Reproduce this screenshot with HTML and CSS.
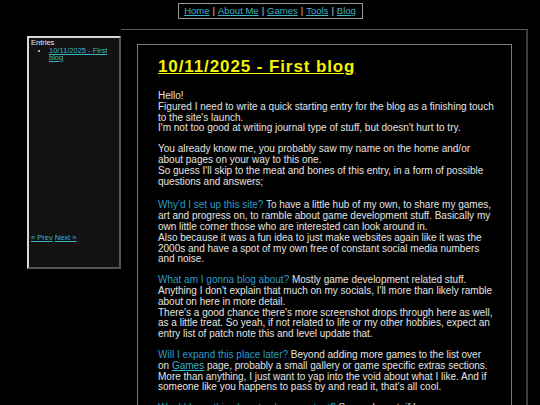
FILE: index.html
```html
<!DOCTYPE html>
<html>
<head>
<meta charset="utf-8">
<link rel="stylesheet" href="styles.css">
</head>
<body>
<nav class="topnav">
  <a href="#">Home</a><span class="sep">|</span><a href="#">About Me</a><span class="sep">|</span><a href="#">Games</a><span class="sep">|</span><a href="#">Tools</a><span class="sep">|</span><a href="#">Blog</a>
</nav>
<div class="layout">
  <aside class="sidebar">
    <div class="side-title">Entries</div>
    <ul class="entries">
      <li><a href="#">10/11/2025 - First blog</a></li>
    </ul>
    <div class="pager"><a href="#">« Prev</a> <a href="#">Next »</a></div>
  </aside>
  <div class="frame">
    <article class="post">
      <h1 class="post-title">10/11/2025 - First blog</h1>
      <p>Hello!<br>Figured I need to write a quick starting entry for the blog as a finishing touch to the site's launch.<br>I'm not too good at writing journal type of stuff, but doesn't hurt to try.</p>
      <p>You already know me, you probably saw my name on the home and/or about pages on your way to this one.<br>So guess I'll skip to the meat and bones of this entry, in a form of possible questions and answers;</p>
      <p class="qa"><span class="q">Why'd I set up this site?</span> To have a little hub of my own, to share my games, art and progress on, to ramble about game development stuff. Basically my own little corner those who are interested can look around in.<br>Also because it was a fun idea to just make websites again like it was the 2000s and have a spot of my own free of constant social media numbers and noise.</p>
      <p><span class="q">What am I gonna blog about?</span> Mostly game development related stuff.<br>Anything I don't explain that much on my socials, I'll more than likely ramble about on here in more detail.<br>There's a good chance there's more screenshot drops through here as well, as a little treat. So yeah, if not related to life or my other hobbies, expect an entry list of patch note this and level update that.</p>
      <p><span class="q">Will I expand this place later?</span> Beyond adding more games to the list over on <a href="#">Games</a> page, probably a small gallery or game specific extras sections.<br>More than anything, I just want to yap into the void about what I like. And if someone like you happens to pass by and read it, that's all cool.</p>
      <p><span class="q">Would I use this place to share content?</span> Sure, why not, if I ever come up with something worth sharing.</p>
    </article>
  </div>
</div>
</body>
</html>
```
FILE: styles.css
```css
html, body {
  margin: 0;
  padding: 0;
  background: #000;
  color: #e4e4e4;
  font-family: "Liberation Sans", Arial, sans-serif;
  overflow: hidden;
  height: 405px;
}
a { color: #3db3c9; }
.topnav {
  width: 183px;
  margin: 3px auto 0;
  border: 1px solid #9a9a9a;
  text-align: center;
  font-size: 9.5px;
  line-height: 14px;
}
.topnav .sep { color: #cfcfcf; margin: 0 3px; }
.layout {
  display: flex;
  align-items: flex-start;
  padding-left: 27px;
  margin-top: 10px;
}
.sidebar {
  box-sizing: border-box;
  width: 94px;
  height: 233px;
  margin-top: 7px;
  background: #121212;
  border: 2px solid;
  border-color: #d8d8d8 #555 #555 #d8d8d8;
  font-size: 7.5px;
  line-height: 8px;
  padding: 1px 2px;
  display: flex;
  flex-direction: column;
}
.side-title { color: #eee; }
.entries {
  margin: 0;
  padding-left: 18px;
  flex: 1;
  color: #ddd;
}
.entries li { line-height: 7px; }
.pager { margin-bottom: 24px; }
.frame {
  box-sizing: border-box;
  width: 407px;
  height: 400px;
  border-top: 1px solid #5a5a5a;
  border-right: 2px solid #3c3c3c;
  padding: 14px 14px 0 16px;
}
.post {
  border: 1px solid #7a7a7a;
  height: 400px;
  overflow: hidden;
  padding: 12px 17px 0 20px;
}
.post-title {
  margin: 0 0 14px;
  font-size: 17px;
  line-height: 20px;
  letter-spacing: 0.9px;
  color: #f4f400;
  text-decoration: underline;
  font-weight: bold;
}
.post p {
  margin: 0 0 10px;
  font-size: 10px;
  line-height: 10.8px;
}
.post p.qa { margin-top: 13px; }
.q { color: #2d9cc3; }
```
